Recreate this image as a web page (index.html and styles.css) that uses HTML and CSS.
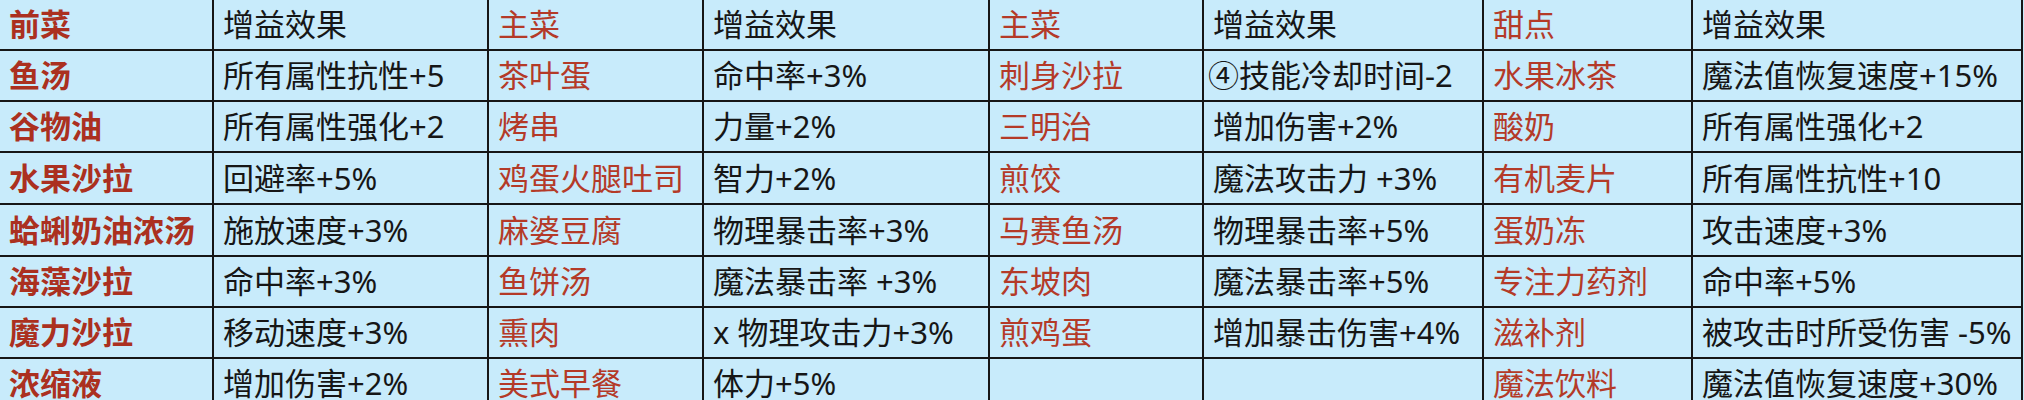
FILE: index.html
```html
<!DOCTYPE html>
<html lang="zh-CN">
<head>
<meta charset="utf-8">
<title>料理增益效果</title>
<link rel="stylesheet" href="styles.css">
</head>
<body>
<div class="sheet">
  <div class="cell dish main">前菜</div><div class="cell eff">增益效果</div><div class="cell dish">主菜</div><div class="cell eff">增益效果</div><div class="cell dish">主菜</div><div class="cell eff">增益效果</div><div class="cell dish">甜点</div><div class="cell eff">增益效果</div>

  <div class="cell dish main">鱼汤</div><div class="cell eff">所有属性抗性+5</div><div class="cell dish">茶叶蛋</div><div class="cell eff">命中率+3%</div><div class="cell dish">刺身沙拉</div><div class="cell eff tight">④技能冷却时间-2</div><div class="cell dish">水果冰茶</div><div class="cell eff">魔法值恢复速度+15%</div>

  <div class="cell dish main">谷物油</div><div class="cell eff">所有属性强化+2</div><div class="cell dish">烤串</div><div class="cell eff">力量+2%</div><div class="cell dish">三明治</div><div class="cell eff">增加伤害+2%</div><div class="cell dish">酸奶</div><div class="cell eff">所有属性强化+2</div>

  <div class="cell dish main">水果沙拉</div><div class="cell eff">回避率+5%</div><div class="cell dish">鸡蛋火腿吐司</div><div class="cell eff">智力+2%</div><div class="cell dish">煎饺</div><div class="cell eff">魔法攻击力 +3%</div><div class="cell dish">有机麦片</div><div class="cell eff">所有属性抗性+10</div>

  <div class="cell dish main">蛤蜊奶油浓汤</div><div class="cell eff">施放速度+3%</div><div class="cell dish">麻婆豆腐</div><div class="cell eff">物理暴击率+3%</div><div class="cell dish">马赛鱼汤</div><div class="cell eff">物理暴击率+5%</div><div class="cell dish">蛋奶冻</div><div class="cell eff">攻击速度+3%</div>

  <div class="cell dish main">海藻沙拉</div><div class="cell eff">命中率+3%</div><div class="cell dish">鱼饼汤</div><div class="cell eff">魔法暴击率 +3%</div><div class="cell dish">东坡肉</div><div class="cell eff">魔法暴击率+5%</div><div class="cell dish">专注力药剂</div><div class="cell eff">命中率+5%</div>

  <div class="cell dish main">魔力沙拉</div><div class="cell eff">移动速度+3%</div><div class="cell dish">熏肉</div><div class="cell eff">x 物理攻击力+3%</div><div class="cell dish">煎鸡蛋</div><div class="cell eff">增加暴击伤害+4%</div><div class="cell dish">滋补剂</div><div class="cell eff">被攻击时所受伤害 -5%</div>

  <div class="cell dish main">浓缩液</div><div class="cell eff">增加伤害+2%</div><div class="cell dish">美式早餐</div><div class="cell eff">体力+5%</div><div class="cell dish"></div><div class="cell eff"></div><div class="cell dish">魔法饮料</div><div class="cell eff">魔法值恢复速度+30%</div>
</div>
</body>
</html>
```

FILE: styles.css
```css
html, body {
  margin: 0;
  padding: 0;
  background: #c8ebfb;
  overflow: hidden;
}

.sheet {
  display: grid;
  grid-template-columns: 212px 273px 213px 284px 212px 278px 207px 328px;
  grid-template-rows: 49px 49px 49px 50px 50px 49px 49px 49px;
  gap: 2px;
  width: 2021px;
  padding-right: 2px;
  padding-bottom: 2px;
  background: #161616;
  font-family: "Noto Sans", "Noto Sans CJK SC", sans-serif;
  font-size: 31px;
}

.cell {
  display: flex;
  align-items: center;
  padding-left: 9px;
  background: #c8ebfb;
  white-space: nowrap;
  overflow: visible;
  line-height: 1;
}

.dish {
  color: #b43a28;
}

.dish.main {
  color: #ab3020;
  font-weight: 700;
}

.eff {
  color: #161616;
}

.eff.tight {
  padding-left: 4px;
}
```
